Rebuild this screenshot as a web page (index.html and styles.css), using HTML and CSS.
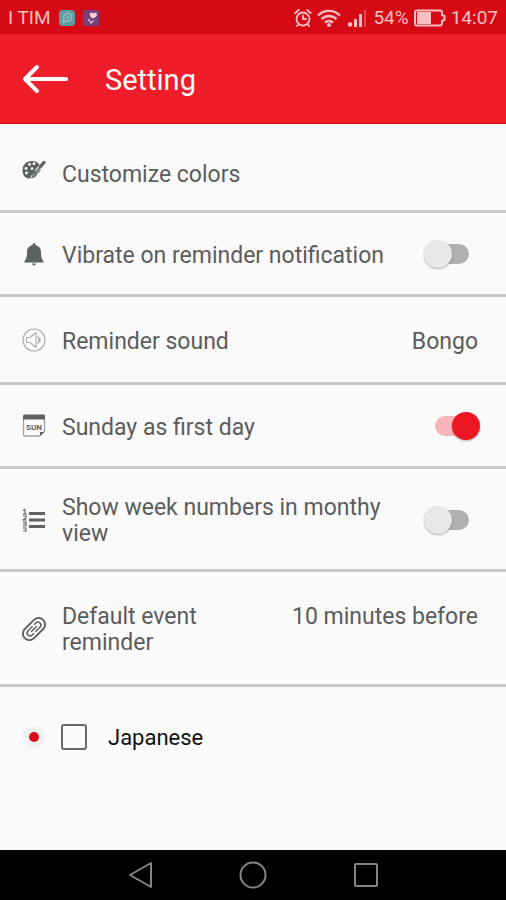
FILE: index.html
```
<!DOCTYPE html>
<html lang="en">
<head>
	<meta charset="utf-8">
	<meta name="viewport" content="width=device-width, initial-scale=1">
	<title>Setting</title>
	<link rel="stylesheet" href="styles.css">
</head>
<body>
	<!-- status bar -->
	<div class="status">
		<span>I TIM</span>
		<svg class="app-icon" width="16" height="16" viewBox="0 0 16 16">
			<rect width="16" height="16" rx="4" fill="#5b9ea6"/>
			<path d="M4 12l1-3a4 4 0 1 1 2 2z" fill="none" stroke="#a3b9bd" stroke-width="1.4"/>
			<circle cx="8.500" cy="7.500" r="1.300" fill="#a3b9bd"/>
		</svg>
		<svg class="app-icon" width="16" height="16" viewBox="0 0 16 16">
			<rect width="16" height="16" rx="2" fill="#75417c"/>
			<path d="M7 3.500c1-1.500 2.500-1 3 0 1-1.500 4-1 4 1 0 2-2 3-4 4-2-1-4-3-3-5z" fill="#ffd3d8"/>
			<path d="M5 9l3 3.500 3-2M8 12.500v1.500" fill="none" stroke="#d9a9c4" stroke-width="1.400"/>
		</svg>
		<div class="status-right">
			<svg width="18" height="20" viewBox="0 0 18 20" fill="none" stroke="#ffbfc3" stroke-width="1.800" stroke-linecap="round">
				<circle cx="9" cy="11" r="6.500"/>
				<path d="M9 7.500V11h3M1.200 5l3.600-3M16.800 5l-3.600-3M4.500 16l-1.500 2M13.500 16l1.500 2"/>
			</svg>
			<svg width="24" height="20" viewBox="0 0 24 20" fill="none" stroke="#ffbfc3" stroke-width="2.400">
				<path d="M1 7.500a15.500 15.500 0 0 1 22 0M4.500 11.200a10.500 10.500 0 0 1 15 0M8 14.700a5.700 5.700 0 0 1 8 0"/>
				<circle cx="12" cy="17" r="2" fill="#ffbfc3" stroke="none"/>
			</svg>
			<svg width="22" height="20" viewBox="0 0 22 20" fill="#ffbfc3">
				<circle cx="4" cy="16.500" r="2.300"/>
				<path d="M8 11h3v8H8zM13 6h3v13h-3z"/>
				<path d="M18 2h2v17h-2z" opacity=".35"/>
			</svg>
			<span>54%</span>
			<svg width="32" height="18" viewBox="0 0 32 18">
				<path d="M3 1.500h23q2 0 2 2V6l2.500 1v4L28 12v2.500q0 2-2 2H3q-2 0-2-2v-11q0-2 2-2z" fill="none" stroke="#ffbfc3" stroke-width="2"/>
				<path d="M3 3h14v12H3z" fill="#ffbfc3"/>
			</svg>
			<span>14:07</span>
		</div>
	</div>

	<!-- title bar -->
	<header class="header">
		<button type="button" class="back" aria-label="Back">
			<svg width="48" height="32" viewBox="0 0 48 32" fill="none" stroke="#fff" stroke-width="4" stroke-linecap="round" stroke-linejoin="round">
				<path d="M44 15H3M15 3L3 15l12 12"/>
			</svg>
		</button>
		<h1>Setting</h1>
	</header>

	<!-- settings list -->
	<main class="list">
		<div class="row row-first">
			<svg class="icon" width="24" height="24" viewBox="0 0 24 24">
				<path d="M10 3C4 3 .500 7 .500 12c0 4.500 2.500 8.500 6 8.500 3 0 2-3 4-4 2.500-1 5.500 0 7.500-3 1-2 .500-5-1-7.500C15.500 4 13 3 10 3z" fill="#5e6261"/>
				<g fill="#fafafa">
					<circle cx="7.500" cy="6.500" r="1.400"/>
					<circle cx="12" cy="5.700" r="1.400"/>
					<circle cx="4" cy="10.500" r="1.400"/>
					<circle cx="4.500" cy="15" r="1.400"/>
					<circle cx="10" cy="10.500" r="1.300"/>
				</g>
				<path d="M7.500 20.500c4-1 2-5 5-7l3 2.500c-1 3-4 4.500-8 4.500z" fill="#777b7a"/>
				<path d="M14 13.500L22 5" stroke="#fafafa" stroke-width="4"/>
				<path d="M14 14L19 8.500" stroke="#777b7a" stroke-width="2.400"/>
				<path d="M18.500 8.500L22 4.500" stroke="#5e6261" stroke-width="3.400" stroke-linecap="round"/>
			</svg>
			<span class="label">Customize colors</span>
		</div>

		<div class="row">
			<svg class="icon" width="24" height="24" viewBox="0 0 24 24" fill="#5e6261">
				<path d="M12 1q1.500 0 1.500 2c3.500.800 5.500 3.500 5.500 7 0 5 .500 7 2.500 9v1.500h-19V19c2-2 2.500-4 2.500-9 0-3.500 2-6.200 5.500-7q0-2 1.500-2zM10 21.500h4q-.500 2-2 2t-2-2z"/>
			</svg>
			<label class="label" for="vibrate">Vibrate on reminder notification</label>
			<input type="checkbox" class="switch" id="vibrate">
		</div>

		<div class="row row-tall">
			<svg class="icon" width="24" height="24" viewBox="0 0 24 24" fill="none" stroke="#b0b0b0" stroke-width="1.200">
				<circle cx="12" cy="12" r="11"/>
				<path d="M4.500 9.500H8L14 4.500v15L8 14.500H4.500zM15.500 8q3 4 0 8M17.500 9.500q1.500 2.500 0 5" stroke-linejoin="round"/>
			</svg>
			<span class="label">Reminder sound</span>
			<button type="button" class="value">Bongo</button>
		</div>

		<div class="row">
			<svg class="icon" width="24" height="24" viewBox="0 0 24 24">
				<path d="M1.500 3v17.500q0 1.500 1.500 1.500h14.500l5-5V3" fill="none" stroke="#a0a2a2" stroke-width="1.400"/>
				<path d="M1 2q0-1.500 1.500-1.500h19Q23 .500 23 2v3.500H1z" fill="#5e6261"/>
				<path d="M18 22v-4h4.500z" fill="#5e6261"/>
				<text x="12" y="16" class="icon-sun">SUN</text>
			</svg>
			<label class="label" for="sunday">Sunday as first day</label>
			<input type="checkbox" class="switch" id="sunday" checked>
		</div>

		<div class="row">
			<svg class="icon" width="24" height="24" viewBox="0 0 24 24" fill="none" stroke="#5e6261">
				<path d="M7 5.500h16M7 12h16M7 18.500h16" stroke-width="3"/>
				<path d="M1 2.500L3 1.500V6M1 6h4M1 8h3v2L1 12h4M1 14h3v4M1 16h3M1 18h3M1 20h3v3H1" stroke-width="1.100"/>
			</svg>
			<label class="label" for="weeks">Show week numbers in monthy view</label>
			<input type="checkbox" class="switch" id="weeks">
		</div>

		<div class="row row-event">
			<svg class="icon" width="24" height="24" viewBox="0 0 24 24" fill="none" stroke="#5e6261">
				<g transform="rotate(-45 12 12)">
					<rect x="-1" y="5.500" width="26" height="13" rx="6.500" stroke-width="1.900"/>
					<path d="M13 9H6.500a3 3 0 0 0 0 6H9M11 15h6.500a3 3 0 0 0 0-6H15M8 12h8" stroke-width="1.500"/>
				</g>
			</svg>
			<span class="label">Default event reminder</span>
			<button type="button" class="value value-top">10 minutes before</button>
		</div>

		<div class="row row-last">
			<svg class="icon" width="24" height="24" viewBox="0 0 24 24">
				<circle cx="12" cy="12" r="11" fill="#f1f1f1"/>
				<circle cx="12" cy="12" r="5" fill="#d80a18"/>
			</svg>
			<input type="checkbox" class="tick" id="japanese">
			<label class="label label-dark" for="japanese">Japanese</label>
		</div>
	</main>

	<!-- system navigation -->
	<nav class="nav">
		<button type="button" aria-label="Back">
			<svg width="28" height="28" viewBox="0 0 28 28"><path d="M25 2v24L4 14z"/></svg>
		</button>
		<button type="button" aria-label="Home">
			<svg width="28" height="28" viewBox="0 0 28 28"><circle cx="14" cy="14" r="12.500"/></svg>
		</button>
		<button type="button" aria-label="Recent apps">
			<svg width="28" height="28" viewBox="0 0 28 28"><rect x="3" y="3" width="22" height="22" rx="1"/></svg>
		</button>
	</nav>
</body>
</html>
```

FILE: styles.css
```
* {
	box-sizing: border-box;
}
body {
	margin: 0;
	min-height: 100vh;
	display: flex;
	flex-direction: column;
	background: #fafafa;
	color: #5c5c5c;
	font-family: Roboto, "Liberation Sans", sans-serif;
	font-size: 23px;
	line-height: 26px;
}
button {
	margin: 0;
	padding: 0;
	border: 0;
	background: none;
	color: inherit;
	font: inherit;
}
svg {
	display: block;
	flex: none;
}

/* status bar */
.status {
	display: flex;
	align-items: center;
	gap: 8px;
	height: 34px;
	padding: 2px 8px 0;
	background: #d60a14;
	color: #ffbfc3;
	font-size: 19px;
	line-height: 24px;
}
.status-right {
	display: flex;
	align-items: center;
	gap: 5px;
	margin-left: auto;
}

/* title bar */
.header {
	display: flex;
	align-items: center;
	gap: 35px;
	height: 90px;
	padding: 2px 22px 0;
	background: #ee1d29;
	border-bottom: 1px solid #d60a14;
	color: #fff;
}
.header h1 {
	margin: 0;
	font-size: 29px;
	line-height: 36px;
	font-weight: 400;
}

/* settings list */
.list {
	flex: 1;
}
.row {
	display: flex;
	align-items: center;
	min-height: 84px;
	padding: 23px 26px 22px 22px;
	border-bottom: 3px solid #c8c8c8;
}
.row-first {
	min-height: 89px;
	padding-top: 34px;
}
.row-first .icon {
	align-self: flex-start;
}
.row-tall {
	min-height: 88px;
}
.row-event {
	padding-top: 29px;
	padding-bottom: 28px;
}
.row-last {
	padding-top: 35px;
	border-bottom: 0;
}
.icon {
	margin-right: 16px;
}
.icon-sun {
	fill: #5e6261;
	font-size: 8px;
	font-weight: 700;
	text-anchor: middle;
}
.label {
	flex: 1;
	padding-top: 3px;
}
.label-dark {
	color: #111;
	font-size: 22px;
}
.value {
	margin-left: 24px;
	padding: 3px 2px 0 0;
	white-space: nowrap;
}
/* level with the first line of a two-line label */
.value-top {
	align-self: flex-start;
}

/* on / off switch */
.switch {
	appearance: none;
	display: grid;
	align-items: center;
	flex: none;
	width: 56px;
	height: 28px;
	margin: 0 0 0 24px;
}
.switch::before,
.switch::after {
	content: "";
	grid-area: 1 / 1;
}
.switch::before {
	height: 20px;
	margin: 0 11px;
	border-radius: 10px;
	background: #b0b0b0;
}
.switch::after {
	width: 28px;
	height: 28px;
	border-radius: 50%;
	background: #e8e8e8;
	box-shadow: 0 1px 2px rgba(0, 0, 0, .3);
}
.switch:checked::before {
	background: #f8b4b8;
}
.switch:checked::after {
	justify-self: end;
	background: #ec1624;
}

.tick {
	appearance: none;
	flex: none;
	width: 26px;
	height: 26px;
	margin: 0 21px 0 -1px;
	border: 2px solid #686868;
	border-radius: 3px;
}

/* system navigation */
.nav {
	display: flex;
	justify-content: center;
	align-items: center;
	gap: 85px;
	height: 50px;
	background: #000;
}
.nav svg {
	fill: none;
	stroke: #858585;
	stroke-width: 2;
	stroke-linejoin: round;
}
```
